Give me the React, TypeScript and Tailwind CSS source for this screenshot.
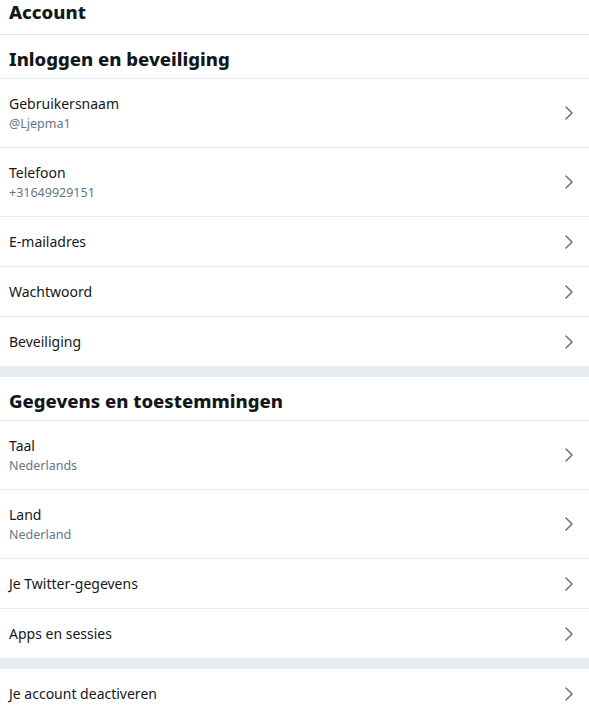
import React from 'react';

type Item = { label: string; sub?: string };

const loginItems: Item[] = [
  { label: 'Gebruikersnaam', sub: '@Ljepma1' },
  { label: 'Telefoon', sub: '+31649929151' },
  { label: 'E-mailadres' },
  { label: 'Wachtwoord' },
  { label: 'Beveiliging' },
];

const dataItems: Item[] = [
  { label: 'Taal', sub: 'Nederlands' },
  { label: 'Land', sub: 'Nederland' },
  { label: 'Je Twitter-gegevens' },
  { label: 'Apps en sessies' },
];

function Chevron() {
  return (
    <svg width="10" height="16" viewBox="0 0 10 16" className="shrink-0">
      <path d="M2 2 L8 8 L2 14" fill="none" stroke="#657786" strokeWidth="1.6" strokeLinecap="round" strokeLinejoin="round" />
    </svg>
  );
}

function Row({ item }: { item: Item }) {
  return (
    <div className="flex items-center justify-between border-b border-[#e6ecf0] pl-[9px] pr-[15px] py-[14px]">
      <div className="flex flex-col">
        <span className="text-[14px] leading-[21px] text-[#14171a]">{item.label}</span>
        {item.sub && <span className="text-[12.5px] leading-[19px] text-[#657786]">{item.sub}</span>}
      </div>
      <Chevron />
    </div>
  );
}

function SectionHeader({ title }: { title: string }) {
  return (
    <div className="h-[44px] flex items-center pt-[4px] pl-[9px] border-b border-[#e6ecf0]">
      <h2 className="text-[18.5px] leading-[24px] font-extrabold text-[#14171a]">{title}</h2>
    </div>
  );
}

export default function App() {
  return (
    <div className="w-[589px] h-[713px] overflow-hidden bg-white" style={{ fontFamily: '"Noto Sans", "Open Sans", sans-serif' }}>
      <div className="h-[35px] pl-[9px] border-b border-[#d9dfe3] flex items-start">
        <h1 className="text-[18.5px] leading-[23px] font-extrabold text-[#14171a]">Account</h1>
      </div>

      <SectionHeader title="Inloggen en beveiliging" />
      {loginItems.map((item) => (
        <Row key={item.label} item={item} />
      ))}

      <div className="h-[10px] bg-[#e6ecf0]" />

      <SectionHeader title="Gegevens en toestemmingen" />
      {dataItems.map((item) => (
        <Row key={item.label} item={item} />
      ))}

      <div className="h-[10px] bg-[#e6ecf0]" />

      <Row item={{ label: 'Je account deactiveren' }} />
    </div>
  );
}
